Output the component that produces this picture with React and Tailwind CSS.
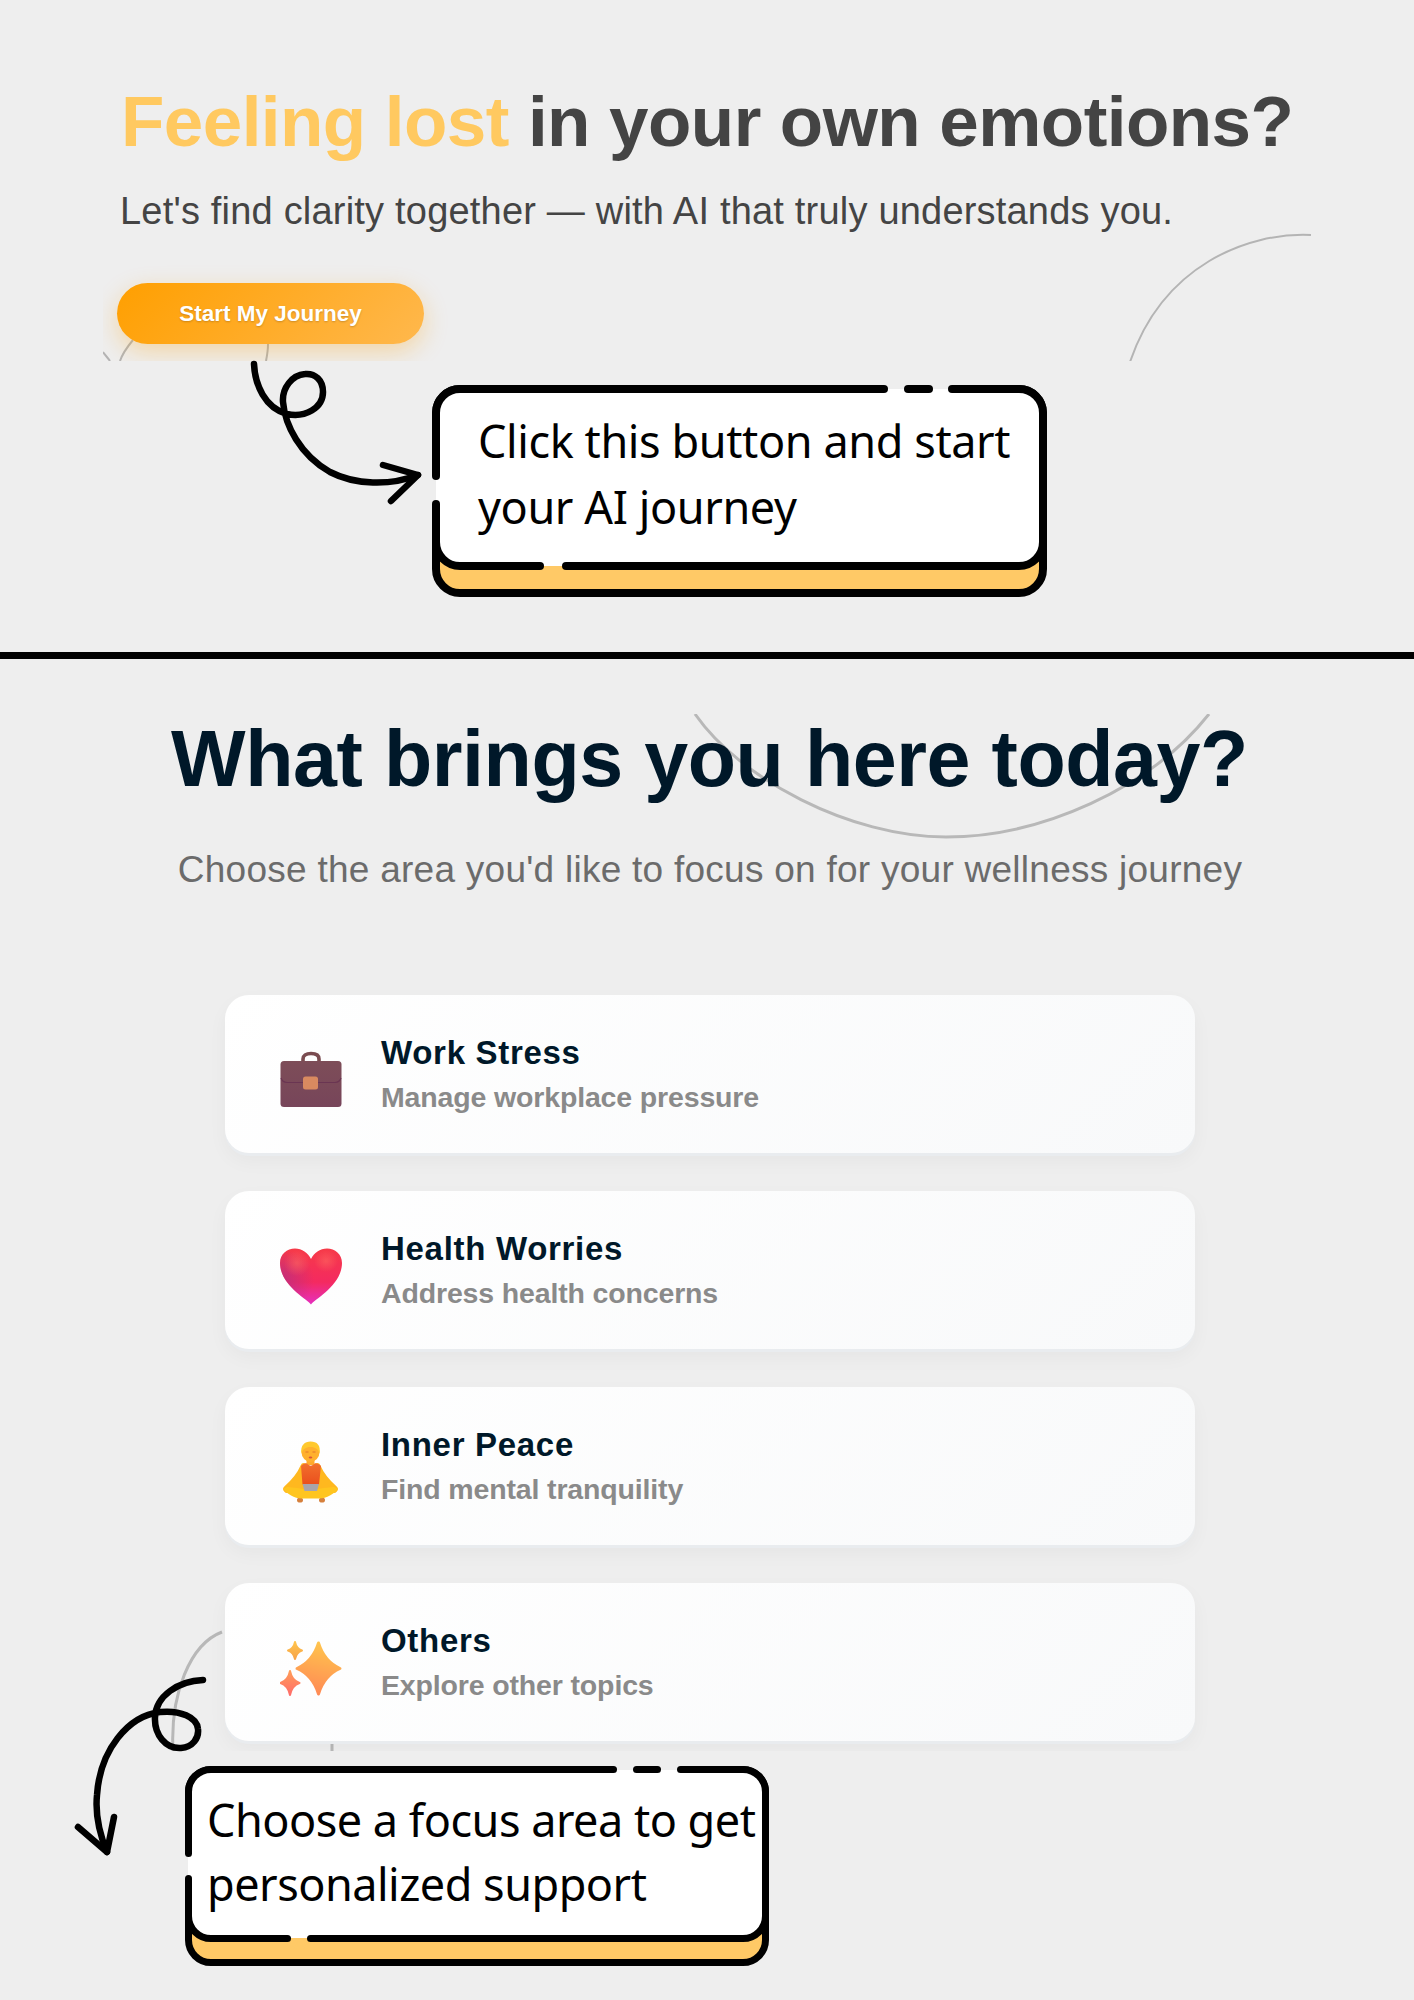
import React from 'react';

const star = (cx, cy, rx, ry, k = 0.27) =>
  `M${cx} ${cy - ry} Q${cx + rx * k} ${cy - ry * k} ${cx + rx} ${cy} Q${cx + rx * k} ${cy + ry * k} ${cx} ${cy + ry} Q${cx - rx * k} ${cy + ry * k} ${cx - rx} ${cy} Q${cx - rx * k} ${cy - ry * k} ${cx} ${cy - ry}Z`;

const heartPath =
  'M31 59.500C27 54 0 40 0 18 0 9 7 3.500 15 3.500 22 3.500 28 8 31 14 34 8 40 3.500 47 3.500 55 3.500 62 9 62 18 62 40 35 54 31 59.500Z';

const BriefcaseIcon = () => (
  <svg width="62" height="62" viewBox="0 0 62 62">
    <defs>
      <linearGradient id="caseBody" x1="0" y1="0" x2="0" y2="1">
        <stop offset="0" stopColor="#7d4d58" />
        <stop offset="1" stopColor="#77455a" />
      </linearGradient>
    </defs>
    <path d="M23 13v-3c0-3.500 3-5.500 8-5.500s8 2 8 5.500v3" fill="none" stroke="#7a4c50" strokeWidth="3.600" />
    <rect x="0.500" y="12" width="61" height="46" rx="3.500" fill="url(#caseBody)" />
    <path d="M1 29c1 3 3 4.500 6 4.500h48c3 0 5-1.500 6-4.500" fill="none" stroke="#6a3552" strokeWidth="1.200" />
    <rect x="23" y="27.500" width="15" height="13" rx="2.500" fill="#d98a60" />
  </svg>
);

const HeartIcon = () => (
  <svg width="62" height="62" viewBox="0 0 62 62">
    <defs>
      <linearGradient id="heartBase" x1="0.500" y1="0" x2="0.500" y2="1">
        <stop offset="0" stopColor="#f63a48" />
        <stop offset="0.6" stopColor="#f42a60" />
        <stop offset="1" stopColor="#e52fc0" />
      </linearGradient>
      <radialGradient id="heartEdge" cx="0" cy="0.55" r="0.55">
        <stop offset="0" stopColor="#a03090" stopOpacity="0.6" />
        <stop offset="1" stopColor="#a03090" stopOpacity="0" />
      </radialGradient>
      <radialGradient id="heartLobe" cx="0.500" cy="0.500" r="0.500">
        <stop offset="0" stopColor="#ff6a62" stopOpacity="0.55" />
        <stop offset="1" stopColor="#ff6a62" stopOpacity="0" />
      </radialGradient>
    </defs>
    <path d={heartPath} fill="url(#heartBase)" />
    <path d={heartPath} fill="url(#heartEdge)" />
    <ellipse cx="17" cy="18" rx="13" ry="13" fill="url(#heartLobe)" />
    <ellipse cx="46" cy="16" rx="12" ry="11" fill="url(#heartLobe)" />
  </svg>
);

const MeditateIcon = () => (
  <svg width="62" height="62" viewBox="0 0 62 62">
    <defs>
      <linearGradient id="tankTop" x1="0.500" y1="0" x2="0.500" y2="1">
        <stop offset="0" stopColor="#f2702c" />
        <stop offset="1" stopColor="#ea4f1e" />
      </linearGradient>
    </defs>
    <ellipse cx="20" cy="59" rx="3" ry="2.600" fill="#d6803c" />
    <ellipse cx="42" cy="59" rx="3" ry="2.600" fill="#d6803c" />
    <path d="M24 26C21 33 14 42 7 48M37 26C40 33 47 42 54 48" fill="none" stroke="#ffb81f" strokeWidth="7.500" strokeLinecap="round" />
    <path d="M21 36L8 49H53L40 36Z" fill="#ffb81f" />
    <path d="M3.500 48C6 45.500 9 46 12 46.500 19 47 25 48 30.500 50 36 48 42 47 49 46.500 52 46 55 45.500 58 48 54 53 46 58 38 57.500L23 57.500C15 58 7 53 3.500 48Z" fill="#ffc51f" />
    <rect x="26.500" y="16" width="8" height="8" fill="#ffa92a" />
    <path d="M21 25C24 21.500 27 21.500 28 23.500 29.500 25 32 25 33.500 23.500 35 21.500 38 21.500 41 25L39 43.500H22.500Z" fill="url(#tankTop)" />
    <path d="M22.500 43H39L37 50H24.500Z" fill="#a8a4ac" />
    <ellipse cx="30.500" cy="11" rx="9" ry="10" fill="#ffb02e" />
    <path d="M21.500 13C20 4 25 0.500 30.500 0.500 37 0.500 41 4 39.500 13 38.500 8 35 6 30.500 6 26 6 22.500 8 21.500 13Z" fill="#ffc92e" />
    <path d="M25.500 11h3M32.500 11h3" stroke="#e0762c" strokeWidth="1" />
    <ellipse cx="30.500" cy="16.500" rx="1.800" ry="1" fill="#d9563a" />
  </svg>
);

const SparklesIcon = () => (
  <svg width="62" height="62" viewBox="0 0 62 62">
    <defs>
      <linearGradient id="sparkBig" x1="0.600" y1="0" x2="0.400" y2="1">
        <stop offset="0" stopColor="#ffc44d" />
        <stop offset="1" stopColor="#ff8a55" />
      </linearGradient>
      <linearGradient id="sparkLow" x1="0.500" y1="0" x2="0.500" y2="1">
        <stop offset="0" stopColor="#ff9c58" />
        <stop offset="1" stopColor="#ff6d6a" />
      </linearGradient>
      <linearGradient id="sparkTop" x1="0.500" y1="0" x2="0.500" y2="1">
        <stop offset="0" stopColor="#ffc44d" />
        <stop offset="1" stopColor="#f7a348" />
      </linearGradient>
    </defs>
    <path d={star(38.500, 31.500, 21.500, 25.500)} fill="url(#sparkBig)" stroke="url(#sparkBig)" strokeWidth="3" strokeLinejoin="round" />
    <path d={star(15, 13.500, 7, 8.500, 0.2)} fill="url(#sparkTop)" stroke="url(#sparkTop)" strokeWidth="2" strokeLinejoin="round" />
    <path d={star(10, 46, 9.500, 12, 0.2)} fill="url(#sparkLow)" stroke="url(#sparkLow)" strokeWidth="2" strokeLinejoin="round" />
  </svg>
);

const focusAreas = [
  { title: 'Work Stress', subtitle: 'Manage workplace pressure', Icon: BriefcaseIcon },
  { title: 'Health Worries', subtitle: 'Address health concerns', Icon: HeartIcon },
  { title: 'Inner Peace', subtitle: 'Find mental tranquility', Icon: MeditateIcon },
  { title: 'Others', subtitle: 'Explore other topics', Icon: SparklesIcon },
];

const FocusCard = ({ title, subtitle, Icon }) => (
  <div className="flex h-[158px] w-[970px] items-center gap-[39px] rounded-[24px] bg-[linear-gradient(135deg,#ffffff,#f8f9fa)] pl-[55px] shadow-[0_3px_0_#e9ecef,0_8px_20px_rgba(0,0,0,0.04)]">
    <div className="mt-[12px] h-[62px] w-[62px] shrink-0">
      <Icon />
    </div>
    <div className="-mt-[2px]">
      <div className="text-[33px] leading-[38px] font-bold tracking-[0.7px] text-[#001829]">{title}</div>
      <div className="mt-[9px] text-[28.500px] leading-[32px] font-semibold tracking-[-0.15px] text-[#8a8a8a]">{subtitle}</div>
    </div>
  </div>
);

const App = () => {
  return (
    <div className="relative min-h-[2000px] w-full overflow-hidden bg-[#eeeeee] font-['Liberation_Sans',Arial,sans-serif]">
      {/* hero */}
      <section className="relative ml-[103px] h-[361px] overflow-hidden pt-[82px] pl-[14px]">
        <svg className="absolute inset-0 h-full w-full" fill="none" stroke="#b4b4b4" strokeWidth="2">
          <path d="M1208 235C1145 232 1060 265 1027 362" />
          <path d="M17 361C20 352 25 346 30 340" />
          <path d="M0 352C2 355 5 358 7 361" />
          <path d="M165 344C165 350 164 356 163 361" />
        </svg>
        <div className="relative">
          <h1 className="pl-[4px] text-[71px] leading-[80px] font-bold tracking-[-0.56px] text-[#444444]">
            <span className="text-[#ffc960]">Feeling lost</span> in your own emotions?
          </h1>
          <p className="mt-[29px] pl-[3px] text-[38px] leading-[40px] tracking-[0.2px] text-[#444444]">
            Let's find clarity together — with AI that truly understands you.
          </p>
          <button className="mt-[52px] h-[61px] w-[307px] rounded-full bg-[linear-gradient(135deg,#ff9f00,#ffb84d)] text-[22.500px] font-bold text-white shadow-[0_8px_25px_rgba(255,159,0,0.3)] [text-shadow:0_1px_2px_rgba(0,0,0,0.2)]">
            Start My Journey
          </button>
        </div>
      </section>

      {/* first callout */}
      <div className="relative mt-[24px] ml-[432px] h-[212px] w-[615px] rounded-[28px] border-8 border-black bg-[#ffc966] font-['Noto_Sans',sans-serif]">
        <div className="-mx-2 -mt-2 h-[185px] rounded-[28px] border-8 border-black bg-white pt-[15px] pl-[38px] text-[45px] leading-[66px] tracking-[-0.4px] text-black">
          Click this button and start
          <br />
          your AI journey
        </div>
        <div className="absolute top-[-8px] left-[440px] flex h-[8px] w-[77px] justify-between bg-[linear-gradient(#eeeeee_50%,#ffffff_50%)]">
          <span className="w-[8px] rounded-r-full bg-black" />
          <span className="w-[29px] rounded-full bg-black" />
          <span className="w-[9px] rounded-l-full bg-black" />
        </div>
        <div className="absolute top-[79px] left-[-8px] flex h-[36px] w-[8px] flex-col justify-between bg-[linear-gradient(90deg,#eeeeee_50%,#ffffff_50%)]">
          <span className="h-[8px] rounded-b-full bg-black" />
          <span className="h-[8px] rounded-t-full bg-black" />
        </div>
        <div className="absolute top-[169px] left-[96px] flex h-[8px] w-[34px] justify-between bg-[linear-gradient(#ffffff_50%,#ffc966_50%)]">
          <span className="w-[8px] rounded-r-full bg-black" />
          <span className="w-[8px] rounded-l-full bg-black" />
        </div>
      </div>

      <div className="mt-[55px] h-[7px] w-full bg-black" />

      {/* focus area picker */}
      <section className="relative mt-[55px] h-[1037px] overflow-hidden">
        <svg className="absolute inset-0 h-full w-full" fill="none" stroke="#b8b8b8" strokeWidth="3">
          <path d="M695 0C740 65 850 123 946 123 1040 123 1150 75 1209 0" />
          <path d="M222 918C190 930 170 980 173 1037" />
          <path d="M332 1030V1037" />
        </svg>
        <div className="relative">
          <h2 className="pl-[5px] text-center text-[79px] leading-[90px] font-bold tracking-[-0.43px] text-[#001829]">What brings you here today?</h2>
          <p className="mt-[45px] pl-[6px] text-center text-[37px] leading-[42px] tracking-[0.26px] text-[#6b6b6b]">
            Choose the area you'd like to focus on for your wellness journey
          </p>
          <div className="mt-[104px] ml-[225px] flex flex-col gap-[38px]">
            {focusAreas.map((area) => (
              <FocusCard key={area.title} {...area} />
            ))}
          </div>
        </div>
      </section>

      {/* second callout */}
      <div className="relative mt-[15px] ml-[185px] h-[200px] w-[584px] rounded-[26px] border-[7px] border-black bg-[#ffc966] font-['Noto_Sans',sans-serif]">
        <div className="-mx-[7px] -mt-[7px] h-[176px] rounded-[26px] border-[7px] border-black bg-white pt-[15px] pl-[15px] text-[45px] leading-[64px] tracking-[-0.5px] whitespace-nowrap text-black">
          Choose a focus area to get
          <br />
          personalized support
        </div>
        <div className="absolute top-[-7px] left-[417px] flex h-[7px] w-[76px] justify-between bg-[linear-gradient(#eeeeee_50%,#ffffff_50%)]">
          <span className="w-[8px] rounded-r-full bg-black" />
          <span className="w-[28px] rounded-full bg-black" />
          <span className="w-[8px] rounded-l-full bg-black" />
        </div>
        <div className="absolute top-[77px] left-[-7px] flex h-[32px] w-[7px] flex-col justify-between bg-[linear-gradient(90deg,#eeeeee_50%,#ffffff_50%)]">
          <span className="h-[7px] rounded-b-full bg-black" />
          <span className="h-[7px] rounded-t-full bg-black" />
        </div>
        <div className="absolute top-[162px] left-[92px] flex h-[7px] w-[30px] justify-between bg-[linear-gradient(#ffffff_50%,#ffc966_50%)]">
          <span className="w-[7px] rounded-r-full bg-black" />
          <span className="w-[7px] rounded-l-full bg-black" />
        </div>
      </div>

      {/* hand drawn arrows */}
      <svg className="pointer-events-none absolute top-0 left-0 h-[2000px] w-[1414px]" fill="none" stroke="#000000" strokeWidth="6.500" strokeLinecap="round" strokeLinejoin="round">
        <path d="M254 364C255 385 265 408 287 414 305 418 323 408 323 392 323 380 315 373 305 374 292 375 282 388 283 402 285 425 300 455 330 472 355 485 390 486 418 475" />
        <path d="M383 465L418 475 391 501" />
        <path d="M203 1680C178 1681 156 1696 155 1717 154 1735 166 1749 181 1748 193 1747 199 1738 198 1729 197 1717 180 1710 160 1712 128 1716 100 1750 97 1795 95 1815 100 1835 107 1852" />
        <path d="M78 1827L107 1852 114 1817" />
      </svg>
    </div>
  );
};

export default App;
